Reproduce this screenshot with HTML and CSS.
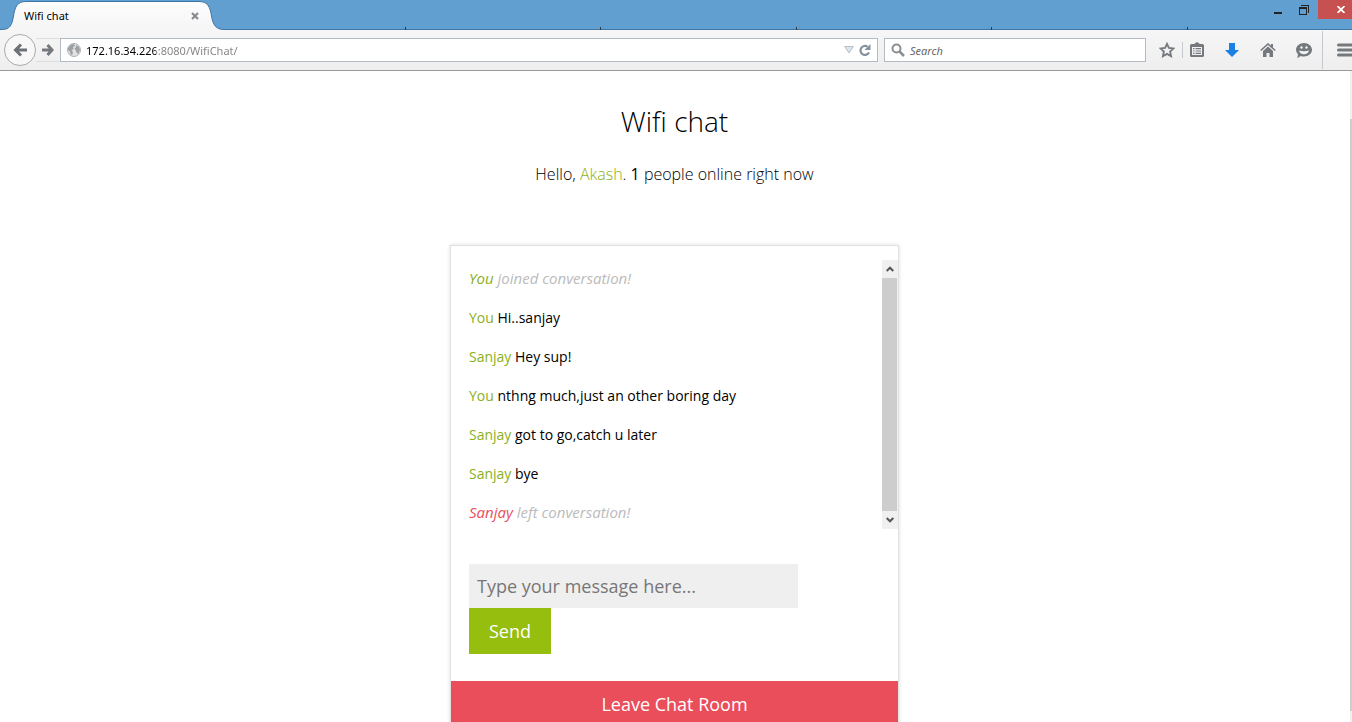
FILE: index.html
```
<!DOCTYPE html>
<html lang="en">
<head>
  <meta charset="UTF-8">
  <meta name="viewport" content="width=device-width, initial-scale=1.0">
  <title>Wifi chat</title>
  <link rel="stylesheet" href="styles.css">
</head>

<body>
  <header class="browser">
    <div class="tab-bar">
      <div class="tab">
        <svg class="tab-shape" viewBox="0 0 225 30" width="225" height="30" aria-hidden="true">
          <defs>
            <linearGradient id="tab-fill" x1="0" y1="0" x2="0" y2="1">
              <stop offset="0" stop-color="#fdfdfd"/>
              <stop offset="1" stop-color="#f5f5f5"/>
            </linearGradient>
          </defs>
          <path d="M0 30V29.500H2C10 29.500 12 25 13.500 16C15 7 17 1.500 26 1.500H199C208 1.500 210 7 211.500 16C213 25 216 29.500 224 29.500V30Z" fill="url(#tab-fill)"/>
          <path d="M0 29.500H2C10 29.500 12 25 13.500 16C15 7 17 1.500 26 1.500H199C208 1.500 210 7 211.500 16C213 25 216 29.500 224 29.500" fill="none" stroke="#3f76a8"/>
        </svg>
        <span class="tab-title">Wifi chat</span>
        <button class="tab-close" type="button" aria-label="Close tab">
          <svg viewBox="0 0 8 8" width="8" height="8"><path d="M1 1L7 7M7 1L1 7" stroke="#868b91" stroke-width="2.200"/></svg>
        </button>
      </div>
      <div class="tab-strip">
        <span></span><span></span><span></span><span></span><span></span>
      </div>
      <div class="window-buttons">
        <button type="button" aria-label="Minimize">
          <svg viewBox="0 0 10 10" width="10" height="10"><path d="M1 7H9V9H1Z" fill="#222"/></svg>
        </button>
        <button type="button" aria-label="Restore">
          <svg viewBox="0 0 10 10" width="10" height="10"><path d="M0 2H8V10H0ZM1 4V9H7V4ZM2 0H10V8H9V1H2Z" fill="#222" fill-rule="evenodd"/></svg>
        </button>
        <button class="window-close" type="button" aria-label="Close">
          <svg viewBox="0 0 8 7" width="8" height="7"><path d="M.500 0L7.500 7M7.500 0L.500 7" stroke="#fff" stroke-width="1.800"/></svg>
        </button>
      </div>
    </div>

    <div class="toolbar">
      <button class="back" type="button" aria-label="Back">
        <svg viewBox="0 0 14 14" width="14" height="14"><path d="M8 1.500L2.500 7L8 12.500M3 7H14" fill="none" stroke="#6c7176" stroke-width="3"/></svg>
      </button>
      <button class="forward" type="button" aria-label="Forward">
        <svg viewBox="0 0 12 12" width="12" height="12"><path d="M5.500 1L10 6L5.500 11M0 6H9.500" fill="none" stroke="#74797e" stroke-width="3"/></svg>
      </button>
      <div class="url-box">
        <svg viewBox="0 0 14 14" width="14" height="14" aria-hidden="true">
          <circle cx="7" cy="7" r="6.500" fill="#e0e1e2" stroke="#b0b3b5"/>
          <path d="M1 5L4 1.500L7 1L8 3L6 4L6.500 6L4.500 7.500L6 9L5 12.500L3.500 11L3 8.500L1 7ZM9 2L12 4L13 7L11 11L9.500 9.500L9 7.500L7.500 6L9 4Z" fill="#9da1a4"/>
        </svg>
        <input class="url" type="text" value="172.16.34.226:8080/WifiChat/" aria-label="Address">
        <button type="button" aria-label="Show history">
          <svg viewBox="0 0 10 8" width="10" height="8"><path d="M.700 .500H9.300L5 7Z" fill="#dce4ec" stroke="#b3bec8"/></svg>
        </button>
        <button type="button" aria-label="Reload">
          <svg viewBox="0 0 12 12" width="12" height="12"><path d="M10 8.500A4.500 4.500 0 1 1 8.500 2.700" fill="none" stroke="#84919d" stroke-width="2.200"/><path d="M11.500 0V6H5.500L7.500 4Z" fill="#84919d"/></svg>
        </button>
      </div>
      <div class="search-box">
        <svg viewBox="0 0 14 14" width="14" height="14" aria-hidden="true"><circle cx="5.500" cy="5.500" r="4" fill="none" stroke="#8b8f92" stroke-width="2"/><path d="M8.500 8.500L13 13" stroke="#8b8f92" stroke-width="2.500"/></svg>
        <input class="search" type="text" placeholder="Search" aria-label="Search">
      </div>
      <div class="tools">
        <button type="button" class="star" aria-label="Bookmark">
          <svg viewBox="0 0 16 16" width="16" height="16"><path d="M8 1.800L9.900 5.900L14.500 6.400L11.100 9.500L12.100 14.200L8 11.900L3.900 14.200L4.900 9.500L1.500 6.400L6.100 5.900Z" fill="none" stroke="#75797d" stroke-width="1.800"/></svg>
        </button>
        <button type="button" class="bookmarks" aria-label="Show bookmarks">
          <svg viewBox="0 0 14 16" width="14" height="16"><path d="M1.500 2H12.500Q14 2 14 3.500V13.500Q14 15 12.500 15H1.500Q0 15 0 13.500V3.500Q0 2 1.500 2ZM2 5V13H12V5Z" fill="#75797d" fill-rule="evenodd"/><path d="M4 3V2L7 0L10 2V3ZM3 6H4.500V7.200H3ZM5.500 6H11V7.200H5.500ZM3 8.400H4.500V9.600H3ZM5.500 8.400H11V9.600H5.500ZM3 10.800H4.500V12H3ZM5.500 10.800H11V12H5.500Z" fill="#75797d"/></svg>
        </button>
        <button type="button" aria-label="Downloads">
          <svg viewBox="0 0 14 14" width="14" height="14"><path d="M4 0H10V7H14L7 14L0 7H4Z" fill="#1a80e6"/></svg>
        </button>
        <button type="button" aria-label="Home">
          <svg viewBox="0 0 16 14" width="16" height="14"><path d="M.700 7.500L8 1L15.300 7.500" fill="none" stroke="#75797d" stroke-width="1.600"/><path d="M11 1H13V5L11 3.500ZM8 3.500L13 8V14H9.500V10H6.500V14H3V8Z" fill="#75797d"/></svg>
        </button>
        <button type="button" aria-label="Hello">
          <svg viewBox="0 0 16 15" width="16" height="15"><path d="M8 0C12.500 0 16 3 16 6.800S12.500 13.500 8 13.500Q6 13.500 4.500 13Q3 15 1 14.800Q2.300 13 1.800 11Q0 9.300 0 6.800C0 3 3.500 0 8 0Z" fill="#75797d"/><path d="M3 7.500Q8 9 13 7.500Q12 11.300 8 11.300T3 7.500Z" fill="#f2f2f2"/><circle cx="5.500" cy="4.500" r="1.200" fill="#f2f2f2"/><circle cx="10.500" cy="4.500" r="1.200" fill="#f2f2f2"/></svg>
        </button>
        <button type="button" class="menu" aria-label="Menu">
          <svg viewBox="0 0 15 14" width="15" height="14"><path d="M1.500 2H15M1.500 7H15M1.500 12H15" stroke="#75797d" stroke-width="3" stroke-linecap="round"/></svg>
        </button>
      </div>
    </div>
  </header>

  <div class="viewport">
    <main class="page">
      <h1>Wifi chat</h1>
      <p class="greeting">Hello, <span class="name">Akash</span>. <b>1</b> people online right now</p>

      <section class="chat">
        <div class="messages">
          <ul class="message-list">
            <li class="notice"><span class="name">You</span> joined conversation!</li>
            <li><span class="name">You</span> Hi..sanjay</li>
            <li><span class="name">Sanjay</span> Hey sup!</li>
            <li><span class="name">You</span> nthng much,just an other boring day</li>
            <li><span class="name">Sanjay</span> got to go,catch u later</li>
            <li><span class="name">Sanjay</span> bye</li>
            <li class="notice"><span class="name left">Sanjay</span> left conversation!</li>
          </ul>
          <div class="scrollbar">
            <button type="button" aria-label="Scroll up">
              <svg viewBox="0 0 8 6" width="8" height="6"><path d="M.700 5L4 1.700L7.300 5" fill="none" stroke="#555" stroke-width="2"/></svg>
            </button>
            <div class="thumb"></div>
            <button type="button" aria-label="Scroll down">
              <svg viewBox="0 0 8 6" width="8" height="6"><path d="M.700 1L4 4.300L7.300 1" fill="none" stroke="#555" stroke-width="2"/></svg>
            </button>
          </div>
        </div>
        <form class="send-form">
          <input class="message-input" type="text" placeholder="Type your message here..." aria-label="Message">
          <button class="send" type="button">Send</button>
        </form>
        <button class="leave" type="button">Leave Chat Room</button>
      </section>
    </main>
    <div class="page-scroll"><div class="page-thumb"></div></div>
  </div>
</body>
</html>
```

FILE: styles.css
```
* {
  box-sizing: border-box;
}

body {
  margin: 0;
  height: 100vh;
  display: flex;
  flex-direction: column;
  overflow: hidden;
  background-color: #fff;
  font-family: "Open Sans", sans-serif;
}

button,
input {
  margin: 0;
  padding: 0;
  border: 0;
  border-radius: 0;
  background: none;
  font-family: inherit;
}

button {
  display: flex;
  align-items: center;
  justify-content: center;
  flex-shrink: 0;
  cursor: pointer;
}

svg {
  flex-shrink: 0;
}

/* browser window */
.browser {
  flex-shrink: 0;
  font-family: "Noto Sans", sans-serif;
  font-size: 11px;
}

.tab-bar {
  display: flex;
  height: 30px;
  background-color: #619fd1;
  box-shadow: inset 0 -1px #3f76a8;
}

.tab {
  position: relative;
  display: flex;
  align-items: center;
  justify-content: space-between;
  width: 210px;
  padding: 1px 11px 0 24px;
}

.tab-shape {
  position: absolute;
  top: 0;
  left: 0;
}

.tab-title,
.tab-close {
  position: relative;
}

.tab-strip {
  flex: 1;
  display: flex;
  align-items: flex-end;
  margin-right: 77px;
}

.tab-strip span {
  flex: 1;
  height: 3px;
  border-right: 1px solid #333b42;
}

.window-buttons {
  display: flex;
}

.window-buttons button {
  width: 26px;
  height: 19px;
}

.window-buttons .window-close {
  width: 34px;
  padding-left: 12px;
  margin-left: 1px;
  background-color: #c75050;
}

.toolbar {
  display: flex;
  align-items: center;
  height: 41px;
  padding-left: 4px;
  border-bottom: 1px solid #999;
  background: linear-gradient(#f6f6f6, #eee);
}

.back {
  width: 32px;
  height: 32px;
  border: 1px solid #aaa;
  border-radius: 50%;
  background-color: #f8f8f8;
}

.forward {
  width: 24px;
  height: 24px;
  border: 1px solid #ddd;
  border-width: 1px 0;
}

.url-box,
.search-box {
  display: flex;
  align-items: center;
  gap: 5px;
  height: 24px;
  padding: 0 6px;
  border: 1px solid #b3bac3;
  background-color: #fff;
}

.url-box {
  flex: 1;
}

.url-box input,
.search-box input {
  flex: 1;
  min-width: 0;
  font-size: 11px;
}

/* host in black, the rest of the address in gray */
.url {
  color: transparent;
  background-image: linear-gradient(90deg, #000 70px, #808080 70px);
  background-clip: text;
  -webkit-background-clip: text;
}

.search-box {
  width: 262px;
  margin: 0 6px;
}

.search::placeholder {
  color: #666;
  font-style: italic;
}

.tools {
  display: flex;
  align-items: center;
}

.tools button {
  width: 36px;
  height: 38px;
}

.tools .star {
  width: 30px;
}

.tools .bookmarks {
  width: 32px;
  height: 16px;
  padding-right: 4px;
  border-left: 1px solid #c5c9cf;
}

.tools .menu {
  width: 30px;
  border-left: 1px solid #c5c9cf;
  justify-content: flex-end;
}

/* page */
.viewport {
  flex: 1;
  min-height: 0;
  display: flex;
  overflow: hidden;
}

.page {
  flex: 1;
  display: flex;
  flex-direction: column;
  align-items: center;
  padding-top: 30px;
}

.page-scroll {
  width: 2px;
  margin-left: 1px;
  padding: 48px 0 11px;
  background-color: #f0f0f0;
}

.page-thumb {
  height: 100%;
  background-color: #cdcdcd;
}

h1 {
  margin: 0;
  font-size: 28px;
  font-weight: 300;
  line-height: 40px;
}

.greeting {
  margin: 21px 0 59px;
  font-size: 16px;
  font-weight: 300;
  line-height: 24px;
}

.greeting b {
  font-weight: 400;
}

.name {
  color: #8bb01c;
}

.name.left {
  color: #ea4e5a;
}

.chat {
  width: 100%;
  max-width: 449px;
  padding-top: 14px;
  border: 1px solid #e0e0e0;
  box-shadow: 0 0 4px #ddd;
}

.messages {
  display: flex;
  height: 269px;
  overflow: hidden;
}

.message-list {
  flex: 1;
  display: flex;
  flex-direction: column;
  gap: 2px;
  margin: 0;
  padding: 0 18px;
  list-style: none;
  font-size: 14px;
  line-height: 37px;
}

.notice {
  color: #bbb;
  font-size: 15px;
  font-style: italic;
}

.scrollbar {
  display: flex;
  flex-direction: column;
  width: 16px;
  background-color: #f0f0f0;
}

.scrollbar button {
  height: 18px;
}

.thumb {
  flex: 1;
  margin-right: 1px;
  background-color: #cdcdcd;
}

.send-form {
  display: flex;
  flex-direction: column;
  align-items: flex-start;
  padding: 35px 18px 27px;
}

.message-input {
  width: 80%;
  height: 44px;
  padding: 0 8px;
  background-color: #efefef;
  font-size: 18px;
}

.message-input::placeholder {
  color: #777;
}

.send,
.leave {
  height: 46px;
  padding: 0 20px;
  color: #fff;
  font-size: 18px;
}

.send {
  background-color: #96be0e;
}

.leave {
  width: 100%;
  background-color: #ea4e5a;
}
```
